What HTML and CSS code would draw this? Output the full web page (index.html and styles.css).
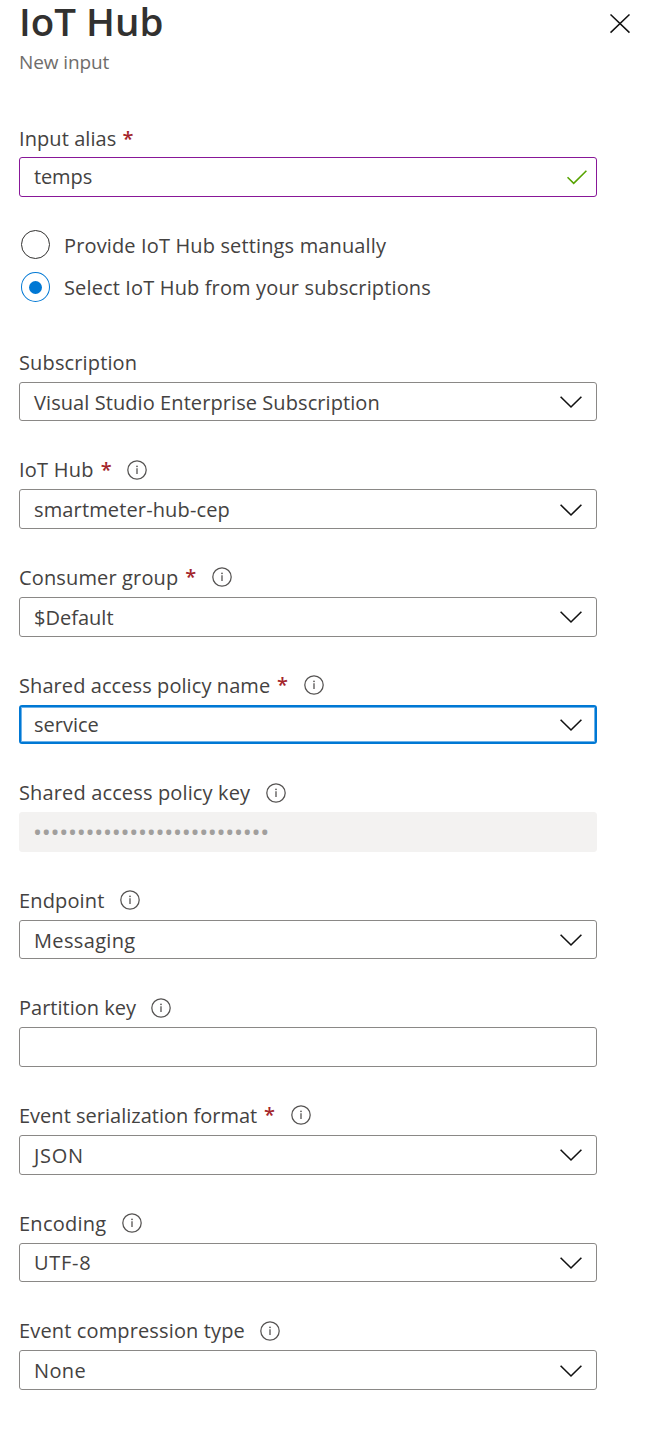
FILE: index.html
```html
<!DOCTYPE html>
<html lang="en">
<head>
<meta charset="utf-8">
<title>IoT Hub - New input</title>
<link rel="stylesheet" href="styles.css">
</head>
<body>
<svg class="defs" aria-hidden="true">
  <symbol id="info" viewBox="0 0 20 20">
    <circle cx="10" cy="10" r="9.2" fill="none" stroke="#555352" stroke-width="1.25"/>
    <path d="M10 8.3V14" stroke="#555352" stroke-width="1.3"/>
    <circle cx="10" cy="6.3" r=".85" fill="#555352"/>
  </symbol>
  <symbol id="chevron" viewBox="0 0 24 14">
    <path d="M1.6 1.8L12 12L22.4 1.8" fill="none" stroke="#111" stroke-width="1.6"/>
  </symbol>
</svg>
<main class="panel">
  <header class="header">
    <div>
      <h1 class="title">IoT Hub</h1>
      <p class="subtitle">New input</p>
    </div>
    <button class="close" aria-label="Close">
      <svg width="20" height="20" viewBox="0 0 20 20"><path d="M.5 .5L19.5 18.6M19.5 .5L.5 18.6" stroke="#111" stroke-width="1.5"/></svg>
    </button>
  </header>

  <form class="form">
    <div class="group alias">
      <div class="label"><span class="snug">Input alias</span><b class="req">*</b></div>
      <div class="box valid"><span class="tight">temps</span>
        <svg class="check" width="20" height="15" viewBox="0 0 20 15"><path d="M.5 7.2L6.7 13.4L19.4 .8" fill="none" stroke="#57a300" stroke-width="1.6"/></svg>
      </div>
    </div>

    <div class="radios">
      <div class="radio"><i class="ring"></i><span>Provide IoT Hub settings manually</span></div>
      <div class="radio"><i class="ring on"></i><span>Select IoT Hub from your subscriptions</span></div>
    </div>

    <div class="group">
      <div class="label"><span>Subscription</span></div>
      <div class="box"><span class="snug">Visual Studio Enterprise Subscription</span><svg class="chev"><use href="#chevron"/></svg></div>
    </div>
    <div class="group">
      <div class="label"><span class="loose">IoT Hub</span><b class="req">*</b><svg class="info"><use href="#info"/></svg></div>
      <div class="box"><span>smartmeter-hub-cep</span><svg class="chev"><use href="#chevron"/></svg></div>
    </div>
    <div class="group">
      <div class="label"><span>Consumer group</span><b class="req">*</b><svg class="info"><use href="#info"/></svg></div>
      <div class="box"><span class="flat">$Default</span><svg class="chev"><use href="#chevron"/></svg></div>
    </div>
    <div class="group">
      <div class="label"><span class="snug">Shared access policy name</span><b class="req">*</b><svg class="info"><use href="#info"/></svg></div>
      <div class="box focus"><span class="flat">service</span><svg class="chev"><use href="#chevron"/></svg></div>
    </div>
    <div class="group">
      <div class="label"><span>Shared access policy key</span><svg class="info"><use href="#info"/></svg></div>
      <div class="box disabled"><span class="mask">•••••••••••••••••••••••••••</span></div>
    </div>
    <div class="group">
      <div class="label"><span>Endpoint</span><svg class="info"><use href="#info"/></svg></div>
      <div class="box"><span class="wide">Messaging</span><svg class="chev"><use href="#chevron"/></svg></div>
    </div>
    <div class="group">
      <div class="label"><span class="flat">Partition key</span><svg class="info"><use href="#info"/></svg></div>
      <div class="box"></div>
    </div>
    <div class="group">
      <div class="label"><span class="flat">Event serialization format</span><b class="req">*</b><svg class="info"><use href="#info"/></svg></div>
      <div class="box"><span class="caps">JSON</span><svg class="chev"><use href="#chevron"/></svg></div>
    </div>
    <div class="group">
      <div class="label"><span class="loose">Encoding</span><svg class="info"><use href="#info"/></svg></div>
      <div class="box"><span class="caps">UTF-8</span><svg class="chev"><use href="#chevron"/></svg></div>
    </div>
    <div class="group">
      <div class="label"><span>Event compression type</span><svg class="info"><use href="#info"/></svg></div>
      <div class="box"><span class="wide">None</span><svg class="chev"><use href="#chevron"/></svg></div>
    </div>
  </form>
</main>
</body>
</html>
```
FILE: styles.css
```css
* { box-sizing: border-box; }
body {
  margin: 0;
  background: #fff;
  color: #444241;
  font: 20px/28px "Open Sans", "Noto Sans", sans-serif;
  letter-spacing: .14px;
}
.defs { display: none; }
.panel { width: 653px; height: 1433px; padding: 0 23px 0 19px; }

.header { display: flex; justify-content: space-between; height: 124px; }
.title { margin: 0; font-size: 38.5px; line-height: 42px; font-weight: 600; letter-spacing: 0; color: #323130; }
.subtitle { margin: 6px 0 0; font-size: 19px; line-height: 28px; letter-spacing: -.1px; color: #6f6d6b; }
.close { width: 20px; height: 20px; margin-top: 14px; padding: 0; border: 0; background: none; }
.close svg { display: block; }

.form { width: 578px; }
.group { margin-bottom: 34px; }
.label { display: flex; align-items: center; height: 28px; margin-bottom: 6px; white-space: pre; }
.label span, .box span, .radio span { padding-top: 2px; }
.req { color: #a4262c; font-weight: 600; margin-left: 6.8px; width: 12px; padding-top: 1px; }
.info { width: 20px; height: 20px; margin: 1px 0 0 15.4px; }
.req + .info { margin-left: 14.8px; }
.box {
  display: flex;
  align-items: center;
  justify-content: space-between;
  height: 39.6px;
  padding: 0 14px;
  border: 1px solid #8a8886;
  border-radius: 3px;
}
.chev { width: 24px; height: 14px; margin-top: 1.4px; margin-right: -1px; }

.alias { margin-bottom: 27px; }
.alias .label { margin-bottom: 5px; }
.alias .box { height: 40px; }
.alias .req { margin-left: 6px; }
.valid { border-color: #881798; padding-right: 9.5px; }
.box.valid span { padding-top: 0; }
.focus { border: 2px solid #0078d4; box-shadow: inset 0 0 0 1px #6cb1e8; padding: 0 13px; }
.disabled { border-color: #f3f2f1; background: #f3f2f1; color: #a19f9d; padding-left: 13px; }
.box .mask { font-size: 24px; letter-spacing: -.28px; padding-top: 0; }

.radios { margin-bottom: 39.8px; }
.radio { display: flex; align-items: center; height: 42px; padding-left: 2px; gap: 14px; }
.ring { display: grid; place-items: center; width: 29px; height: 29px; border: 1px solid #323130; border-radius: 50%; margin-top: -1px; }
.ring.on { width: 29px; height: 30px; margin-top: 0; border-color: #0078d4; }
.ring.on::after { content: ""; width: 13px; height: 13px; border-radius: 50%; background: #0078d4; }

/* tracking steps */
.tight { letter-spacing: -.12px; }
.flat { letter-spacing: .01px; }
.snug { letter-spacing: .08px; }
.loose { letter-spacing: .25px; }
.wide { letter-spacing: .35px; }
.caps { letter-spacing: .7px; }
```
